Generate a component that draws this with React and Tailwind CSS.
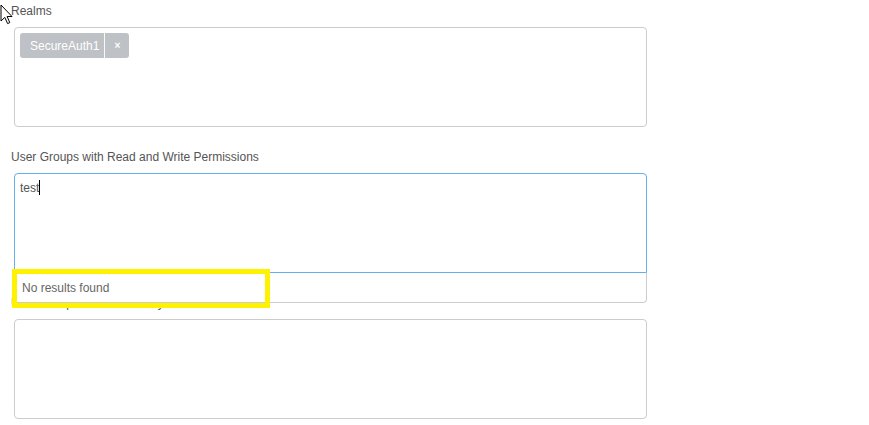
import React from 'react';

const font = { fontFamily: '"Liberation Sans", Arial, sans-serif' };

// Mouse pointer drawn over the top left corner
const Pointer = () => (
    <svg className="absolute left-0 top-[4px]" width="13" height="21" viewBox="0 0 13 21">
        <path
            d="M1 1 L1 17 L4.8 13.4 L7.6 19.6 L9.8 18.6 L7.1 12.5 L12 12.5 Z"
            fill="#fff"
            stroke="#000"
            strokeWidth="1"
            strokeLinejoin="miter"
        />
    </svg>
);

const Label = ({ children }) => (
    <div className="ml-[11px] text-[12px] leading-[18px] text-[#555]">{children}</div>
);

const Tag = ({ children }) => (
    <div className="flex h-[25px] items-stretch rounded-[3px] bg-[#bec2c6] text-white">
        <span className="flex items-center pl-[10px] pr-[5px] text-[12px]">{children}</span>
        <span className="w-px bg-white/90" />
        <span className="flex w-[24px] items-center justify-center text-[10px] font-bold">×</span>
    </div>
);

export default function App() {
    return (
        <div className="relative min-h-[425px] bg-white pt-[2px]" style={font}>
            <Pointer />

            {/* Realms */}
            <Label>Realms</Label>
            <div className="mt-[7px] ml-[14px] h-[100px] w-[633px] rounded-[4px] border border-[#ccc] p-[5px]">
                <div className="flex">
                    <Tag>SecureAuth1</Tag>
                </div>
            </div>

            {/* Read and write groups, focused with open dropdown */}
            <div className="mt-[21px]">
                <Label>User Groups with Read and Write Permissions</Label>
                <div className="relative mt-[7px] ml-[14px] w-[633px]">
                    <div className="h-[100px] rounded-t-[4px] border border-[#66afe9] px-[5px] pt-[3px] text-[12px] leading-[18px] text-[#555]">
                        <span>test</span>
                        <span className="inline-block h-[15px] w-px translate-y-[3px] bg-black" />
                    </div>
                    <div className="absolute left-0 right-0 top-full z-10 h-[30px] rounded-b-[4px] border border-t-0 border-[#ccc] bg-white pl-[7px] pt-[8px] text-[12px] leading-[14px] text-[#666]">
                        No results found
                    </div>
                    <div className="absolute left-[-2px] top-[96px] z-20 h-[39px] w-[258px] border-[5px] border-[#fff200]" />
                </div>
            </div>

            {/* Read only groups */}
            <div className="mt-[21px]">
                <Label>User Groups with Read Only Permissions</Label>
                <div className="mt-[7px] ml-[14px] h-[100px] w-[633px] rounded-[4px] border border-[#ccc]" />
            </div>
        </div>
    );
}
